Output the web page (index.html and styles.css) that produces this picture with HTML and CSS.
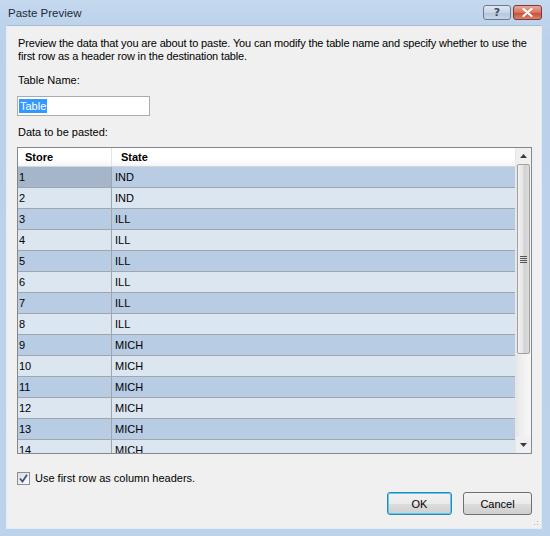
FILE: index.html
```html
<!DOCTYPE html>
<html>
<head>
	<title>Paste Preview</title>
	<link rel="stylesheet" href="styles.css">
</head>
<body>
	<div class="window">
		<div class="titlebar">
			<span class="title">Paste Preview</span>
			<div class="caption-buttons">
				<button class="cap help">?</button>
				<button class="cap close">
					<svg width="11" height="9" viewBox="0 0 11 9"><path d="M1.5 1 L9.5 8 M9.5 1 L1.5 8" stroke="#fff" stroke-width="2.2" stroke-linecap="round"/></svg>
				</button>
			</div>
		</div>
		<div class="client">
			<p class="intro">Preview the data that you are about to paste. You can modify the table name and specify whether to use the first row as a header row in the destination table.</p>
			<label class="field-label" for="tableName">Table Name:</label>
			<div class="textbox"><span class="selected">Table</span></div>
			<div class="field-label">Data to be pasted:</div>

			<div class="grid">
				<div class="grid-data">
					<div class="row header">
						<div class="cell c1">Store</div>
						<div class="cell c2">State</div>
					</div>
					<div class="row odd"><div class="cell c1 current">1</div><div class="cell c2">IND</div></div>
					<div class="row even"><div class="cell c1">2</div><div class="cell c2">IND</div></div>
					<div class="row odd"><div class="cell c1">3</div><div class="cell c2">ILL</div></div>
					<div class="row even"><div class="cell c1">4</div><div class="cell c2">ILL</div></div>
					<div class="row odd"><div class="cell c1">5</div><div class="cell c2">ILL</div></div>
					<div class="row even"><div class="cell c1">6</div><div class="cell c2">ILL</div></div>
					<div class="row odd"><div class="cell c1">7</div><div class="cell c2">ILL</div></div>
					<div class="row even"><div class="cell c1">8</div><div class="cell c2">ILL</div></div>
					<div class="row odd"><div class="cell c1">9</div><div class="cell c2">MICH</div></div>
					<div class="row even"><div class="cell c1">10</div><div class="cell c2">MICH</div></div>
					<div class="row odd"><div class="cell c1">11</div><div class="cell c2">MICH</div></div>
					<div class="row even"><div class="cell c1">12</div><div class="cell c2">MICH</div></div>
					<div class="row odd"><div class="cell c1">13</div><div class="cell c2">MICH</div></div>
					<div class="row even"><div class="cell c1">14</div><div class="cell c2">MICH</div></div>
				</div>
				<div class="scrollbar">
					<div class="arrow"><svg width="7" height="4" viewBox="0 0 7 4"><path d="M0 4 L3.5 0 L7 4 Z" fill="#3a3a3a"/></svg></div>
					<div class="track">
						<div class="thumb">
							<div class="grip"><i></i><i></i><i></i><i></i></div>
						</div>
					</div>
					<div class="arrow"><svg width="7" height="4" viewBox="0 0 7 4"><path d="M0 0 L3.5 4 L7 0 Z" fill="#3a3a3a"/></svg></div>
				</div>
			</div>

			<label class="check">
				<span class="box">
					<svg width="9" height="9" viewBox="0 0 9 9"><path d="M1 4.5 L3.5 7.5 L8 0.8" stroke="#3b4f8f" stroke-width="1.8" fill="none"/></svg>
				</span>
				Use first row as column headers.
			</label>

			<div class="buttons">
				<button class="btn default">OK</button>
				<button class="btn">Cancel</button>
			</div>
			<div class="grip-corner"></div>
		</div>
	</div>
</body>
</html>
```
FILE: styles.css
```css
body {
	margin: 0;
	font-family: "Liberation Sans", Arial, sans-serif;
	font-size: 11px;
	color: #000;
}
.window {
	width: 550px;
	height: 536px;
	box-sizing: border-box;
	padding: 0 8px 7px 6px;
	background: linear-gradient(#c4d8ee, #b9d1ea 40px, #bcd3ec);
	display: flex;
	flex-direction: column;
}
.titlebar {
	height: 25px;
	display: flex;
	align-items: flex-start;
	justify-content: space-between;
}
.title {
	font-size: 11.5px;
	padding: 7px 0 0 2px;
	color: #1e2a3a;
}
.caption-buttons {
	display: flex;
	gap: 2px;
	padding-top: 5px;
}
.cap {
	height: 15px;
	border: 1px solid #6d7a8d;
	border-radius: 3px;
	padding: 0;
	display: flex;
	align-items: center;
	justify-content: center;
}
.help {
	width: 28px;
	background: linear-gradient(#dfe8f3, #c7d5e6 50%, #b3c5dc 51%, #c6d6ea);
	color: #3e4b5e;
	font-family: "DejaVu Sans", sans-serif;
	font-size: 11px;
	font-weight: bold;
	line-height: 13px;
}
.close {
	width: 29px;
	border-color: #7a3a33;
	background: linear-gradient(#e9a99c, #d8735f 50%, #c74a31 51%, #d8836d);
}
.client {
	flex: 1;
	position: relative;
	background: #f0f0f0;
	border: 1px solid #e3ecf6;
	border-top-color: #a7bad1;
	padding: 11px 9px 0 10px;
}
.intro {
	margin: 0;
	line-height: 13px;
	padding-left: 1px;
	letter-spacing: -0.15px;
}
.field-label {
	display: block;
	margin-top: 11px;
	padding-left: 1px;
	line-height: 13px;
}
.textbox {
	width: 130px;
	height: 18px;
	margin-top: 9px;
	border: 1px solid #abadb3;
	border-top-color: #a5acb5;
	background: #fff;
	line-height: 18px;
	padding-left: 1px;
}
.selected {
	background: #3399ff;
	color: #fff;
	padding: 1px 1px;
}
.textbox + .field-label {
	margin-top: 10px;
}
.grid {
	margin-top: 8px;
	height: 305px;
	border: 1px solid #828790;
	display: flex;
	background: #fff;
}
.grid-data {
	flex: 1;
	overflow: hidden;
}
.row {
	display: flex;
	height: 20px;
	border-bottom: 1px solid #a0a5ae;
	line-height: 20px;
}
.row.header {
	height: 18px;
	line-height: 18px;
	font-weight: bold;
	background: linear-gradient(#fff, #fff 60%, #f4f5f7);
	border-bottom: 1px solid #d5d5d5;
}
.odd {
	background: #b8cce4;
}
.even {
	background: #dce6f1;
}
.cell {
	padding-left: 1px;
}
.c1 {
	width: 92px;
	border-right: 1px solid #a0a5ae;
}
.header .c1 {
	border-right-color: #e2e3ea;
	padding-left: 7px;
	width: 86px;
}
.header .c2 {
	padding-left: 9px;
}
.c2 {
	flex: 1;
	padding-left: 3px;
}
.current {
	background: #a5b5ca;
}
.scrollbar {
	width: 15px;
	display: flex;
	flex-direction: column;
	background: #f0f0f0;
	border-left: 1px solid #e6e6e6;
}
.arrow {
	height: 16px;
	display: flex;
	align-items: center;
	justify-content: center;
}
.track {
	flex: 1;
	background: linear-gradient(90deg, #e6e6e6, #f0f0f0 40%, #f7f7f7);
}
.thumb {
	height: 190px;
	margin: 0 1px;
	box-sizing: border-box;
	border: 1px solid #a0a0a0;
	border-radius: 2px;
	background: linear-gradient(90deg, #f2f2f2, #e4e4e4 45%, #d2d2d2 55%, #dcdcdc);
	display: flex;
	align-items: center;
	justify-content: center;
}
.grip {
	display: flex;
	flex-direction: column;
	gap: 1px;
}
.grip i {
	display: block;
	width: 7px;
	height: 1px;
	background: #555;
}
.check {
	display: flex;
	align-items: center;
	gap: 5px;
	margin-top: 18px;
	line-height: 13px;
}
.box {
	width: 11px;
	height: 11px;
	border: 1px solid #8e8f8f;
	background: linear-gradient(135deg, #dcdcdc, #fff);
	display: flex;
	align-items: center;
	justify-content: center;
}
.buttons {
	display: flex;
	justify-content: flex-end;
	gap: 11px;
	margin-top: 7px;
}
.btn {
	font-family: "Liberation Sans", Arial, sans-serif;
	font-size: 11px;
	height: 23px;
	border: 1px solid #707070;
	border-radius: 3px;
	background: linear-gradient(#f2f2f2, #ebebeb 50%, #dddddd 51%, #cfcfcf);
	padding: 0;
}
.btn.default {
	width: 65px;
	border-color: #3c7fb1;
	box-shadow: inset 0 0 0 1px #48d2f7;
}
.btn + .btn {
	width: 69px;
}
.grip-corner {
	position: absolute;
	right: 1px;
	bottom: 1px;
	width: 10px;
	height: 10px;
	background: radial-gradient(circle, #b5b5b5 0.8px, transparent 1px) 0 0 / 3px 3px;
	clip-path: polygon(100% 0, 100% 100%, 0 100%);
}
```
